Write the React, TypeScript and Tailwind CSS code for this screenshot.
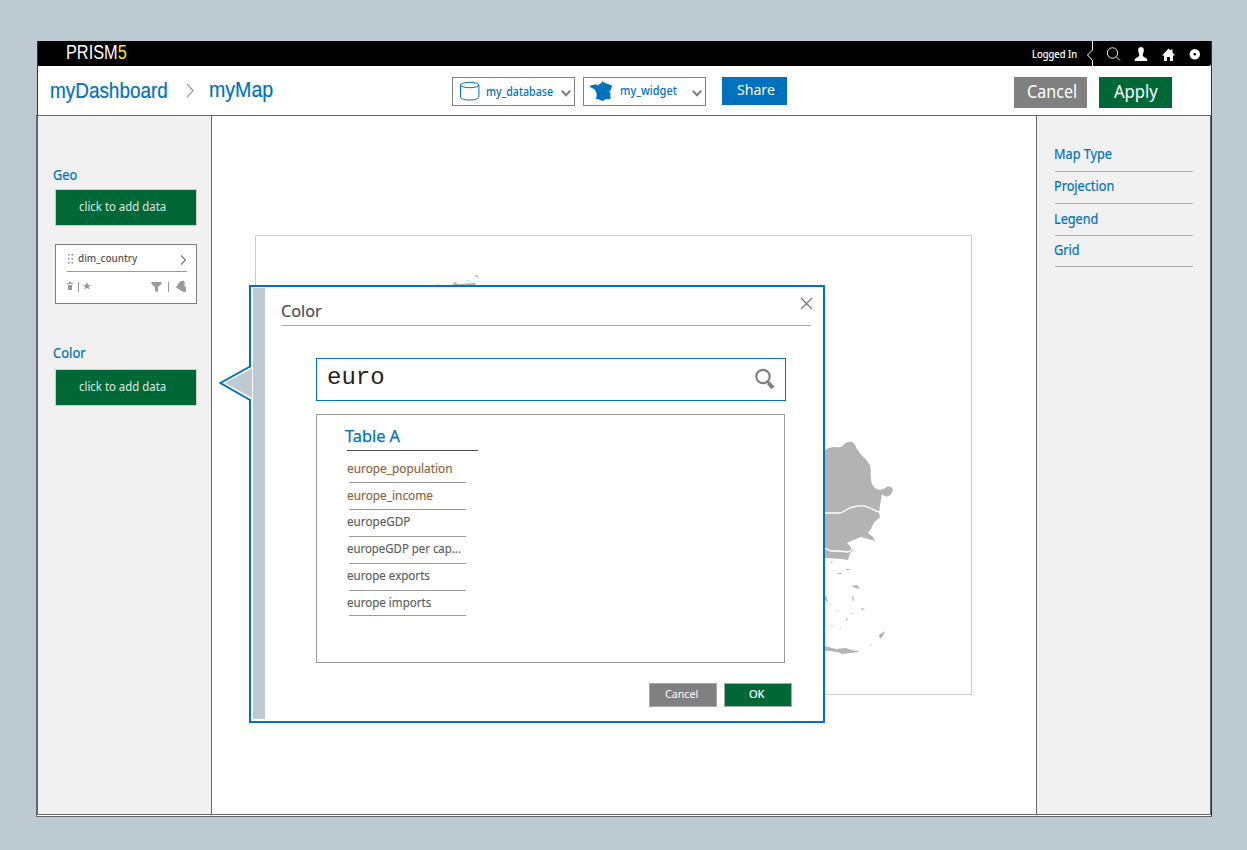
import React from "react";

type LabelProps = { children: React.ReactNode; className?: string };

/** Condensed humanist label, anchored on its left edge. */
function Label({ children, className = "" }: LabelProps) {
  return (
    <span className={`block w-max shrink-0 origin-left whitespace-nowrap ${className}`}>{children}</span>
  );
}

function TopBar() {
  return (
    <div className="flex h-[25px] shrink-0 items-start rounded-br-[3px] bg-black pl-[28px]">
      <Label className="scale-x-[0.815] font-['Liberation_Sans',sans-serif] text-[20px] leading-[22px] text-white">
        PRISM<span className="text-[#f7ec13]">5</span>
      </Label>
      <div className="ml-auto flex h-[25px] w-[179px]">
        <div className="w-[54px] pt-[5px]">
          <Label className="scale-x-[0.86] text-[11px] leading-[15px] text-white [-webkit-text-stroke:0.2px_#fff]">Logged In</Label>
        </div>
        <svg width="125" height="25" viewBox="1086 41 125 25" fill="none" className="shrink-0">
          <path d="M1092.500 41v9l-5 5 5 5.500v5.500" stroke="#fff" />
          <circle cx="1112.500" cy="53" r="5.200" stroke="#eee" />
          <path d="m1116.500 57 3.500 3.500" stroke="#eee" />
          <path
            d="M1141 47c-2.200 0-3 1.600-2.800 3.800.2 1.900.9 2.700 1.100 3.700.2 1.600-.8 2.300-2.300 2.900-1.600.7-2.300 1.200-2.300 3.600h12.600c0-2.400-.7-2.900-2.300-3.600-1.500-.6-2.500-1.300-2.300-2.900.2-1 .9-1.800 1.100-3.700.2-2.200-.6-3.800-2.800-3.800Z"
            fill="#fff"
          />
          <path d="m1168.500 48.500-6.500 7h2v5.500h3v-4h3v4h3v-5.500h2l-2.500-3v-3h-2v1Z" fill="#fff" />
          <circle cx="1194.800" cy="54.300" r="5.200" fill="#fff" />
          <circle cx="1194.800" cy="54.300" r="1.300" fill="#000" />
        </svg>
      </div>
    </div>
  );
}

function Chevron() {
  return (
    <svg width="10" height="7" viewBox="0 0 10 7" fill="none" className="mt-[12px] -ml-[0.500px] shrink-0">
      <path d="m.8.8 4.200 4.400L9.200.8" stroke="#808080" strokeWidth="2.200" />
    </svg>
  );
}

function Toolbar() {
  return (
    <div className="flex h-[49px] shrink-0 bg-white">
      <div className="flex w-[414px] pl-[12px] text-[#0071bc]">
        <div className="w-[135px] pt-[12px]">
          <Label className="scale-x-[0.88] font-['Liberation_Sans',sans-serif] text-[21.500px] leading-[26px] [-webkit-text-stroke:0.2px_#0071bc]">
            myDashboard
          </Label>
        </div>
        <svg width="10" height="15" viewBox="0 0 10 15" fill="none" className="mt-[17px] mr-[14px]">
          <path d="m2 .8 6 6.700-6 6.700" stroke="#888" strokeWidth="1.100" />
        </svg>
        <div className="pt-[11px]">
          <Label className="scale-x-[0.91] font-['Liberation_Sans',sans-serif] text-[21.500px] leading-[26px] [-webkit-text-stroke:0.2px_#0071bc]">
            myMap
          </Label>
        </div>
      </div>
      <button className="mt-[11px] flex h-[29px] w-[123px] border border-[#808080] pl-[7px]">
        <svg width="20" height="21" viewBox="0 0 20 21" fill="none" stroke="#0071bc" className="mt-[3px] shrink-0">
          <ellipse cx="9.700" cy="4" rx="9.200" ry="2.700" />
          <path d="M.5 4v12c.6 2 4.400 3 9.200 3s8.600-1 9.200-3V4" />
        </svg>
        <div className="w-[81px] shrink-0 pl-[6px] pt-[5px]">
          <Label className="scale-x-[0.885] text-[12px] font-medium leading-[17px] text-[#0071bc]">my_database</Label>
        </div>
        <Chevron />
      </button>
      <button className="mt-[11px] ml-[8px] flex h-[29px] w-[123px] border border-[#808080] pl-[5px]">
        <svg width="24" height="21" viewBox="0 0 24 21" fill="#0071bc" className="mt-[2px] shrink-0">
          <path d="m13.500 1 1.500 1.500 2.500 1 2 .7 3.500 1.300-.8 3.500-2 3 1.500 1.200-.5 3 .8 1.800-2.500 1.500-3-.5-1.500 1.500-1 .5-3-1.300-4-1 .8-4-.8-3-1.500-2.500-4-2L.5 6l2-.7 3-.5 1-.8 1 .7 1.500.8 1.500-1.500 2-1Z" />
        </svg>
        <div className="w-[79px] shrink-0 pl-[7px] pt-[4px]">
          <Label className="scale-x-[0.915] text-[12px] font-medium leading-[17px] text-[#0071bc]">my_widget</Label>
        </div>
        <Chevron />
      </button>
      <button className="mt-[11px] ml-[16px] flex h-[28px] w-[65px] bg-[#0071bc] pl-[15px] pt-[2px]">
        <Label className="scale-x-[0.94] text-[15px] leading-[20px] text-white">Share</Label>
      </button>
      <button className="mt-[11px] ml-auto flex h-[31px] w-[73px] bg-[#808080] pl-[13px] pt-[2px]">
        <Label className="scale-x-[0.92] text-[17.500px] leading-[24px] text-white">Cancel</Label>
      </button>
      <button className="mt-[11px] mr-[39px] ml-[12px] flex h-[31px] w-[73px] bg-[#006837] pl-[14.500px] pt-[2px]">
        <Label className="scale-x-[0.95] text-[17.500px] leading-[24px] text-white">Apply</Label>
      </button>
    </div>
  );
}

function AddData() {
  return (
    <button className="flex h-[37px] w-[142px] border border-[#ccc] bg-[#006837] pl-[22.500px] pt-[8px]">
      <Label className="scale-x-[0.95] text-[12px] leading-[17px] text-[#dcebe2]">click to add data</Label>
    </button>
  );
}

function FieldCard() {
  return (
    <div className="mt-[18px] h-[60px] w-[142px] border border-[#808080] bg-white px-[9px] pl-[11px]">
      <div className="flex h-[27px] border-b border-[#999]">
        <svg width="7" height="10" viewBox="0 0 7 10" fill="#888" className="mt-[9px] shrink-0">
          {[0, 4, 8].map((y) => (
            <React.Fragment key={y}>
              <rect x="1" y={y} width="1.500" height="1.500" />
              <rect x="4.500" y={y} width="1.500" height="1.500" />
            </React.Fragment>
          ))}
        </svg>
        <Label className="ml-[4px] mt-[5px] scale-x-[0.905] text-[11px] font-medium leading-[16px] text-[#555]">
          dim_country
        </Label>
        <svg width="8" height="12" viewBox="0 0 8 12" fill="none" className="mt-[9px] ml-auto shrink-0">
          <path d="m2 1.500 4.500 4.500L2 10.500" stroke="#777" strokeWidth="1.200" />
        </svg>
      </div>
      <svg width="122" height="20" viewBox="67 278 122 20" fill="#999" className="mt-[6px]">
        <path d="M67 283h2v-1h2v1h2v1h-6zM68 285h4v5h-4zM78 282h1v10h-1zM168 282h1v10h-1z" />
        <path d="m87 282 1.200 2.900h3l-2.400 1.800.9 2.900-2.700-1.700-2.700 1.700.9-2.900-2.400-1.800h3z" />
        <path d="M151.500 282h10v2l-3.500 3v5l-3-1v-4l-3.500-3z" />
        <path d="m181 281 3-.3.800 2-.5 3 1.700 1.800v4l-2 1-1.500-1.500-2-.5-2-1.500-2.500-1.500 2-3.500z" />
      </svg>
    </div>
  );
}

function LeftPanel() {
  return (
    <aside className="w-[174px] shrink-0 border-r border-[#666] bg-[#f1f1f1] pl-[17px]">
      <Label className="-ml-[2px] mt-[50px] scale-x-[0.94] text-[13.500px] leading-[18px] text-[#0071bc] [-webkit-text-stroke:0.2px_#0071bc]">Geo</Label>
      <div className="mt-[5px]">
        <AddData />
      </div>
      <FieldCard />
      <Label className="-ml-[2px] mt-[40px] scale-x-[0.96] text-[13.500px] leading-[18px] text-[#0071bc] [-webkit-text-stroke:0.2px_#0071bc]">Color</Label>
      <div className="mt-[7px]">
        <AddData />
      </div>
    </aside>
  );
}

function MapArtwork() {
  return (
    <svg width="715" height="458" viewBox="256 236 715 458" fill="#b3b3b3">
      <path d="m435 286 3-2 3 2zm17-1 3-3 3 2 17-1 1 2-4 2h-21zM474 276l3-1 2 3-2-1zM468 280h1v1h-1z" />
      <path d="M820 451c6 0 8-4 14-4 4 1 6 0 9-1 2-5 10-6 12-1 3 8 11 13 15 20 2 7-1 17 4 22 4 4 8 3 11 1 8-5 10 4 5 7-3 3-6 1-8-1-1 4-1 8-2 11l-1 8 1 5c-5 2-7 6-9 11l-3 4 5 4 2 4-10-3-4-1-10 4-4 2 7 7-4 3-2 7-6-1-16-1-6 2z" />
      <path
        d="M820 513h19c5 0 8-5 14-6 8-2 14-1 17 1 4 1 6 5 12 4M820 547l7 2 4 2h7l10 1 4-2-1-5 2-1"
        fill="none"
        stroke="#fff"
        strokeWidth="1.300"
      />
      <path d="m851 586 6-1 3 4-4-1zm2 10 1 3-1 3-1-5zM825 595l2 3 1 5-3-3zM829 603l4 3-4-2zM837 573h5v1h-4zM846 569h4v1h-4zM831 561l2 1-2 1zM861 608l4 1-3 1zM846 618l2 1-2 2zM837 610l4 4-5-4zM851 613l3 1h-3zM869 624l2 1-2-1zM879 635l6-4-2 5-3 3zM831 625l2 1-1 1zM840 627l1 1-1 1zM871 644l1 1-1 1z" />
      <path d="m820 645 4 1 12 3 10-1 5 2 7 1 1 1-9 1-8 1-4-2-18-2z" />
    </svg>
  );
}

const results = [
  { name: "europe_population", tint: "text-[#8c6239]", box: "h-[27px]", pad: "pt-[4px]", scale: "scale-x-[0.947]" },
  { name: "europe_income", tint: "text-[#8c6239]", box: "h-[27px]", pad: "pt-[4px]", scale: "scale-x-[0.947]" },
  { name: "europeGDP", tint: "text-[#5c5c5c]", box: "h-[27px]", pad: "pt-[3px]", scale: "scale-x-[0.935]" },
  { name: "europeGDP per cap...", tint: "text-[#5c5c5c]", box: "h-[27px]", pad: "pt-[3px]", scale: "scale-x-[0.912]" },
  { name: "europe exports", tint: "text-[#5c5c5c]", box: "h-[27px]", pad: "pt-[3px]", scale: "scale-x-[0.925]" },
  { name: "europe imports", tint: "text-[#5c5c5c]", box: "h-[25px]", pad: "pt-[3px]", scale: "scale-x-[0.925]" },
];

function ColorDialog() {
  return (
    <div className="absolute top-[169px] left-[37px] flex h-[438px] w-[576px] border-2 border-[#0071bc] bg-white p-[2px]">
      <svg width="34" height="40" viewBox="218 364 34 40" className="absolute top-[77px] -left-[33px]">
        <path d="M252 366.500 220 383l32 17z" fill="#fff" />
        <path d="m252 368.500-27 14.500 27 15z" fill="#bdcad2" />
        <path d="M250 364v2.500L220.500 383 250 400v4" fill="none" stroke="#0071bc" strokeWidth="2" />
      </svg>
      <div className="-mt-[1px] w-[12px] shrink-0 bg-[#bdcad2]" />
      <div className="flex-1 pl-[17px]">
        <div className="flex h-[37px] w-[529px] border-b border-[#aaa]">
          <Label className="mt-[10px] -ml-[1px] scale-x-[0.955] text-[17px] leading-[24px] text-[#4d4d4d] [-webkit-text-stroke:0.2px_#4d4d4d]">Color</Label>
          <svg width="13" height="13" viewBox="0 0 13 13" className="mt-[8px] -mr-[1.500px] ml-auto">
            <path d="m1 1 11 11M12 1 1 12" stroke="#777" strokeWidth="1.200" />
          </svg>
        </div>
        <div className="mt-[32px] ml-[34px] flex h-[43px] w-[470px] border border-[#0071bc] pl-[10px] pt-[6px]">
          <Label className="font-['Liberation_Mono',monospace] text-[24px] leading-[26px] text-[#222]">euro</Label>
          <svg width="22" height="23" viewBox="0 0 22 23" fill="none" stroke="#808080" className="mt-[3px] mr-[9px] ml-auto">
            <circle cx="9" cy="8.500" r="6.700" strokeWidth="2.200" />
            <path d="m13.500 13.500 2.500 2.500" strokeWidth="2.500" />
            <path d="m14.500 15 4.500 5" strokeWidth="4" />
          </svg>
        </div>
        <div className="mt-[13px] ml-[34px] h-[249px] w-[469px] border border-[#999] pt-[9px] pl-[30px]">
          <div className="h-[27px] w-[131px] border-b border-[#4d4d4d]">
            <Label className="-ml-[2px] scale-x-[0.96] text-[17px] leading-[23px] text-[#0071bc] [-webkit-text-stroke:0.25px_#0071bc]">Table A</Label>
          </div>
          <div className="mt-[5px] ml-[2px] w-[117px]">
            {results.map((r) => (
              <div key={r.name} className={`border-b border-[#999] ${r.box} ${r.pad}`}>
                <Label className={`-ml-[2px] text-[12.500px] leading-[17px] [-webkit-text-stroke:0.15px_currentColor] ${r.scale} ${r.tint}`}>{r.name}</Label>
              </div>
            ))}
          </div>
        </div>
        <div className="mt-[20px] ml-[367px] flex gap-[7px]">
          <button className="flex h-[24px] w-[68px] border border-[#aaa] bg-[#808080] pl-[15px] pt-[2px]">
            <Label className="scale-x-[0.93] text-[11.500px] leading-[16px] text-white">Cancel</Label>
          </button>
          <button className="flex h-[24px] w-[68px] border border-[#aaa] bg-[#006837] pl-[24px] pt-[2px]">
            <Label className="scale-x-[0.96] text-[11.500px] leading-[16px] text-white [-webkit-text-stroke:0.2px_#fff]">OK</Label>
          </button>
        </div>
      </div>
    </div>
  );
}

const settings = [
  { name: "Map Type", row: "h-[28px]" },
  { name: "Projection", row: "h-[32px] pt-[4px]" },
  { name: "Legend", row: "h-[32px] pt-[5px]" },
  { name: "Grid", row: "h-[31px] pt-[4px]" },
];

function RightPanel() {
  return (
    <aside className="w-[174px] shrink-0 border-l border-[#666] bg-[#f1f1f1] pt-[28px] pl-[18px]">
      <div className="w-[138px] text-[#0071bc]">
        {settings.map((s) => (
          <div key={s.name} className={`border-b border-[#aaa] ${s.row}`}>
            <Label className="-ml-[1px] scale-x-[0.94] text-[13.500px] leading-[20px] [-webkit-text-stroke:0.2px_#0071bc]">
              {s.name}
            </Label>
          </div>
        ))}
      </div>
    </aside>
  );
}

export default function App() {
  return (
    <div className="h-[850px] w-[1247px] overflow-hidden bg-[#bdcad2] pt-[41px] pl-[36px] font-['Noto_Sans',sans-serif]">
      <div className="flex h-[776px] w-[1176px] flex-col">
        <div className="ml-[1px] flex h-[74px] shrink-0 flex-col border-x border-[#333]">
          <TopBar />
          <Toolbar />
        </div>
        <div className="h-[702px] border-y border-r border-l border-[#666] border-r-[#333] bg-white pb-[1px]">
          <div className="flex h-[699px] border-x border-b border-[#666]">
            <LeftPanel />
            <main className="relative w-[824px] shrink-0 pt-[119px] pl-[43px]">
              <div className="h-[460px] w-[717px] border border-[#ccc]">
                <MapArtwork />
              </div>
              <ColorDialog />
            </main>
            <RightPanel />
          </div>
        </div>
      </div>
    </div>
  );
}
